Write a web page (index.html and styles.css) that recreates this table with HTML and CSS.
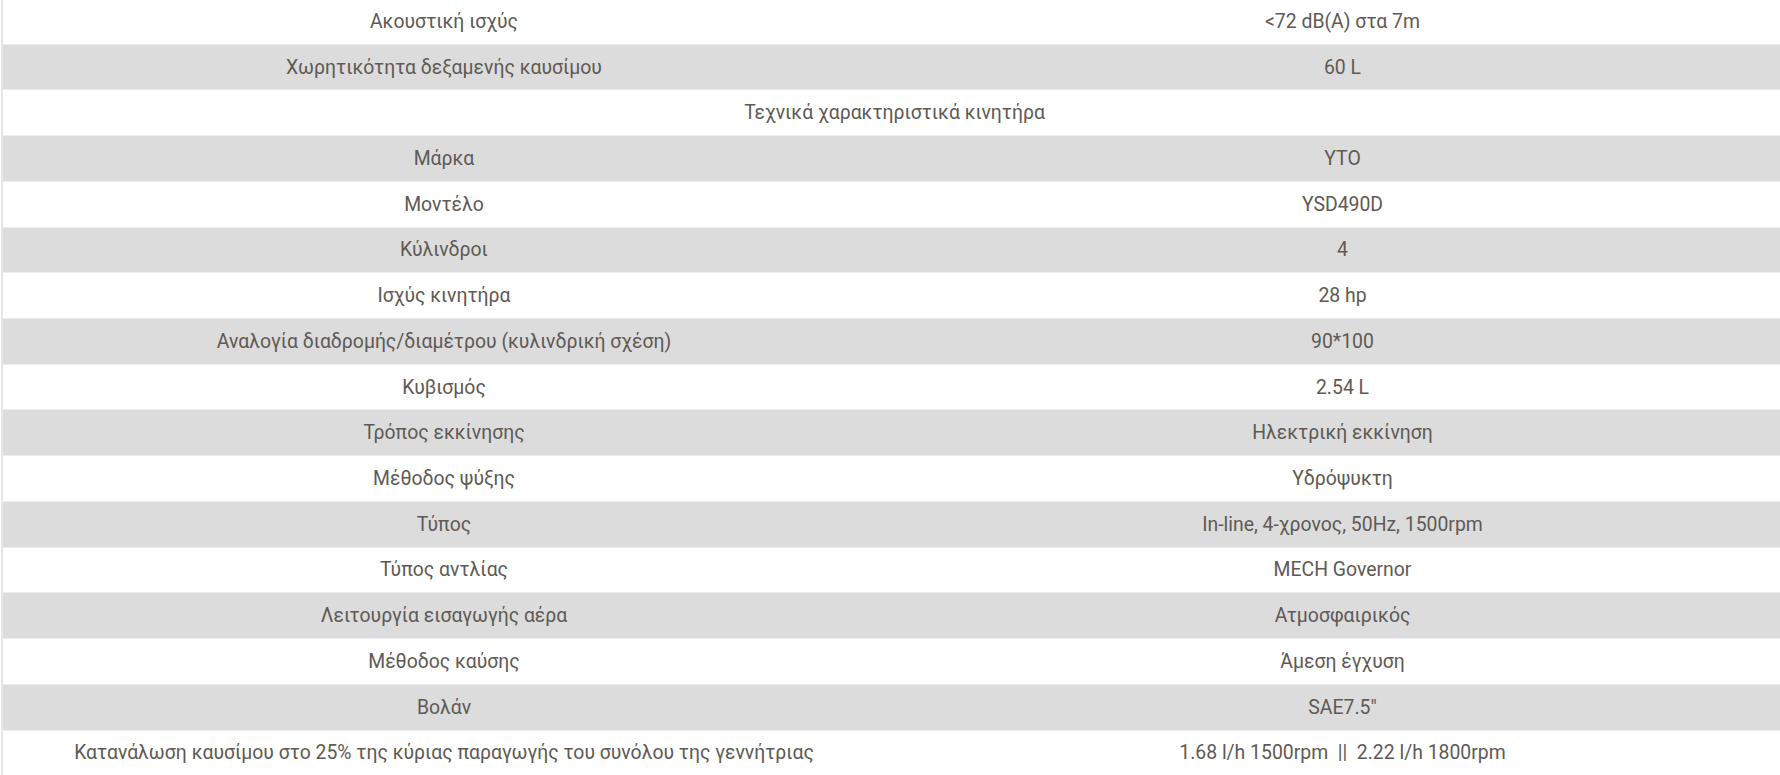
FILE: index.html
```html
<!DOCTYPE html>
<html lang="el">
<head>
<meta charset="utf-8">
<link rel="stylesheet" href="styles.css">
</head>
<body>
<div class="specs">
  <div class="row"><div class="cell">Ακουστική ισχύς</div><div class="cell val">&lt;72 dB(A) στα 7m</div></div>
  <div class="row alt"><div class="cell">Χωρητικότητα δεξαμενής καυσίμου</div><div class="cell val">60 L</div></div>
  <div class="row"><div class="cell full">Τεχνικά χαρακτηριστικά κινητήρα</div></div>
  <div class="row alt"><div class="cell">Μάρκα</div><div class="cell val">YTO</div></div>
  <div class="row"><div class="cell">Μοντέλο</div><div class="cell val">YSD490D</div></div>
  <div class="row alt"><div class="cell">Κύλινδροι</div><div class="cell val">4</div></div>
  <div class="row"><div class="cell">Ισχύς κινητήρα</div><div class="cell val">28 hp</div></div>
  <div class="row alt"><div class="cell">Αναλογία διαδρομής/διαμέτρου (κυλινδρική σχέση)</div><div class="cell val">90*100</div></div>
  <div class="row"><div class="cell">Κυβισμός</div><div class="cell val">2.54 L</div></div>
  <div class="row alt"><div class="cell">Τρόπος εκκίνησης</div><div class="cell val">Ηλεκτρική εκκίνηση</div></div>
  <div class="row"><div class="cell">Μέθοδος ψύξης</div><div class="cell val">Υδρόψυκτη</div></div>
  <div class="row alt"><div class="cell">Τύπος</div><div class="cell val">In-line, 4-χρονος, 50Hz, 1500rpm</div></div>
  <div class="row"><div class="cell">Τύπος αντλίας</div><div class="cell val">MECH Governor</div></div>
  <div class="row alt"><div class="cell">Λειτουργία εισαγωγής αέρα</div><div class="cell val">Ατμοσφαιρικός</div></div>
  <div class="row"><div class="cell">Μέθοδος καύσης</div><div class="cell val">Άμεση έγχυση</div></div>
  <div class="row alt"><div class="cell">Βολάν</div><div class="cell val">SAE7.5"</div></div>
  <div class="row"><div class="cell">Κατανάλωση καυσίμου στο 25% της κύριας παραγωγής του συνόλου της γεννήτριας</div><div class="cell val">1.68 l/h 1500rpm &nbsp;||&nbsp; 2.22 l/h 1800rpm</div></div>
</div>
</body>
</html>
```

FILE: styles.css
```css
html, body {
  margin: 0;
  padding: 0;
  background: #ffffff;
  overflow: hidden;
}

.specs {
  margin-left: 1px;
  margin-top: -1px;
  border-left: 2px solid #e6e6e6;
  font-family: Roboto, "Noto Sans", sans-serif;
  font-size: 19.4px;
  color: #5e5a55;
}

.row {
  display: grid;
  grid-template-columns: 882px 1fr;
  align-items: center;
  height: 45.73px;
  box-sizing: border-box;
  border-bottom: 1px solid #ededed;
  background: #ffffff;
}

.row.alt {
  background: #dcdcdc;
}

.cell {
  text-align: center;
  white-space: nowrap;
}

.cell.val {
  padding-left: 20px;
}

.cell.full {
  grid-column: 1 / -1;
  padding-left: 6px;
}
```
